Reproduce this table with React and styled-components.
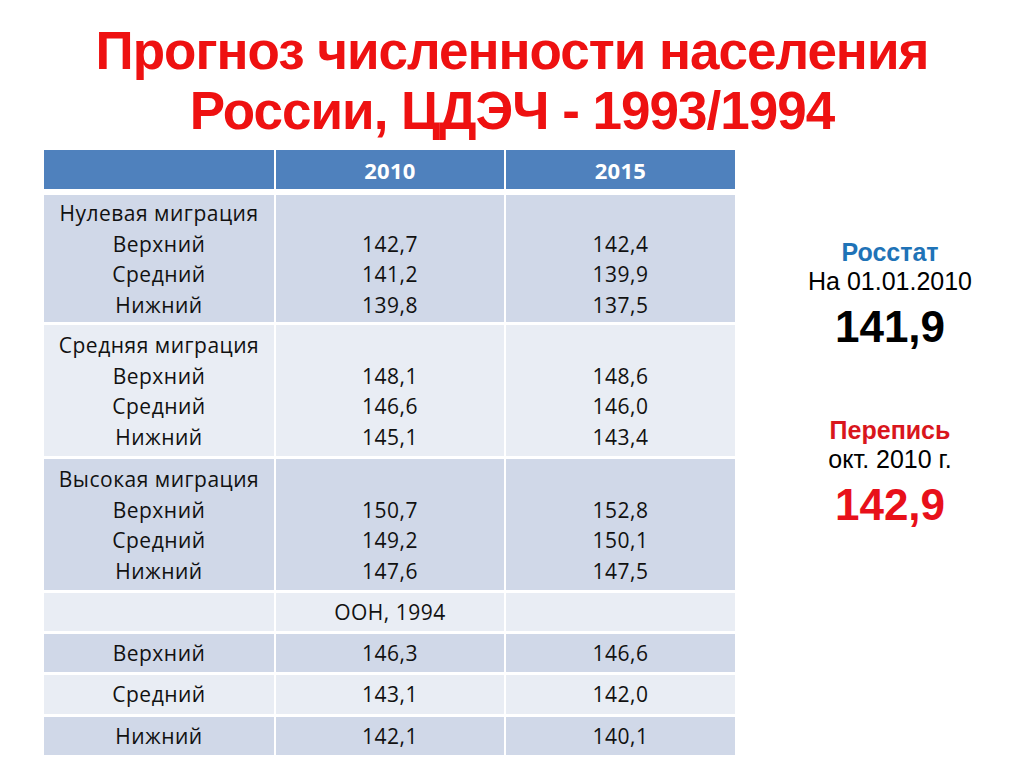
import React from "react";
import styled, { createGlobalStyle } from "styled-components";

const GlobalStyle = createGlobalStyle`
  html, body {
    margin: 0;
    padding: 0;
    background: #ffffff;
  }
  body {
    font-family: "Liberation Sans", Arial, sans-serif;
  }
`;

const groups = [
  {
    title: "Нулевая миграция",
    rows: [
      ["Верхний", "142,7", "142,4"],
      ["Средний", "141,2", "139,9"],
      ["Нижний", "139,8", "137,5"],
    ],
    pad: "3px 0 2px",
  },
  {
    title: "Средняя миграция",
    rows: [
      ["Верхний", "148,1", "148,6"],
      ["Средний", "146,6", "146,0"],
      ["Нижний", "145,1", "143,4"],
    ],
    pad: "5px 0 4px",
  },
  {
    title: "Высокая миграция",
    rows: [
      ["Верхний", "150,7", "152,8"],
      ["Средний", "149,2", "150,1"],
      ["Нижний", "147,6", "147,5"],
    ],
    pad: "5px 0 4px",
  },
];

const un = [
  ["Верхний", "146,3", "146,6"],
  ["Средний", "143,1", "142,0"],
  ["Нижний", "142,1", "140,1"],
];

export default function App() {
  let shade = 0;
  return (
    <>
      <GlobalStyle />
      <Slide>
        <Title>
          Прогноз численности населения
          <br />
          России, ЦДЭЧ - 1993/1994
        </Title>
        <Body>
          <Table>
            <Head />
            <Head>2010</Head>
            <Head>2015</Head>

            {groups.map((g) => {
              const dark = shade++ % 2 === 0;
              return (
                <React.Fragment key={g.title}>
                  <Cell $dark={dark} $pad={g.pad}>
                    <div>{g.title}</div>
                    {g.rows.map((r) => (
                      <div key={r[0]}>{r[0]}</div>
                    ))}
                  </Cell>
                  <Cell $dark={dark} $pad={g.pad}>
                    <div>&nbsp;</div>
                    {g.rows.map((r) => (
                      <div key={r[0]}>{r[1]}</div>
                    ))}
                  </Cell>
                  <Cell $dark={dark} $pad={g.pad}>
                    <div>&nbsp;</div>
                    {g.rows.map((r) => (
                      <div key={r[0]}>{r[2]}</div>
                    ))}
                  </Cell>
                </React.Fragment>
              );
            })}

            <Cell $pad="4px 0 3px" />
            <Cell $pad="4px 0 3px">ООН, 1994</Cell>
            <Cell $pad="4px 0 3px" />

            {un.map((r, i) => (
              <React.Fragment key={r[0]}>
                {r.map((v, j) => (
                  <Cell key={j} $dark={i % 2 === 0} $pad="4px 0 4px">
                    {v}
                  </Cell>
                ))}
              </React.Fragment>
            ))}
          </Table>

          <Side>
            <Label $color="#1f73b7">Росстат</Label>
            <Note>На 01.01.2010</Note>
            <Big $color="#000000">141,9</Big>
            <Spacer />
            <Label $color="#d9161c">Перепись</Label>
            <Note>окт. 2010 г.</Note>
            <Big $color="#e8101a">142,9</Big>
          </Side>
        </Body>
      </Slide>
    </>
  );
}

const Slide = styled.div`
  width: 1024px;
  height: 768px;
  overflow: hidden;
  display: flex;
  flex-direction: column;
`;

const Title = styled.h1`
  margin: 0;
  padding-top: 21px;
  height: 150px;
  box-sizing: border-box;
  text-align: center;
  color: #ee1111;
  font-family: "Liberation Sans", Arial, sans-serif;
  font-weight: bold;
  font-size: 53px;
  line-height: 60px;
  letter-spacing: -1px;
`;

const Body = styled.div`
  display: flex;
  align-items: flex-start;
  padding-left: 44px;
`;

const Table = styled.div`
  display: grid;
  grid-template-columns: 230px 228px 229px;
  column-gap: 2px;
  row-gap: 3px;
  width: 691px;
  font-family: "Open Sans", sans-serif;
  font-size: 21px;
  letter-spacing: 0.5px;
  color: #111111;
`;

const Head = styled.div`
  background: #4f81bd;
  color: #ffffff;
  font-weight: bold;
  font-size: 22px;
  letter-spacing: 0.3px;
  height: 39px;
  line-height: 40px;
  margin-bottom: 3px;
  text-align: center;
`;

const Cell = styled.div`
  background: ${(p) => (p.$dark ? "#d0d8e8" : "#e9edf4")};
  padding: ${(p) => p.$pad};
  line-height: 30.5px;
  text-align: center;
`;

const Side = styled.div`
  flex: 1;
  display: flex;
  flex-direction: column;
  align-items: center;
  padding-top: 88px;
  padding-left: 21px;
  font-family: "Liberation Sans", Arial, sans-serif;
`;

const Label = styled.div`
  color: ${(p) => p.$color};
  font-weight: bold;
  font-size: 25px;
  line-height: 29px;
`;

const Note = styled.div`
  color: #000000;
  font-size: 25px;
  line-height: 29px;
`;

const Big = styled.div`
  color: ${(p) => p.$color};
  font-weight: bold;
  font-size: 44px;
  line-height: 62px;
`;

const Spacer = styled.div`
  height: 58px;
`;
